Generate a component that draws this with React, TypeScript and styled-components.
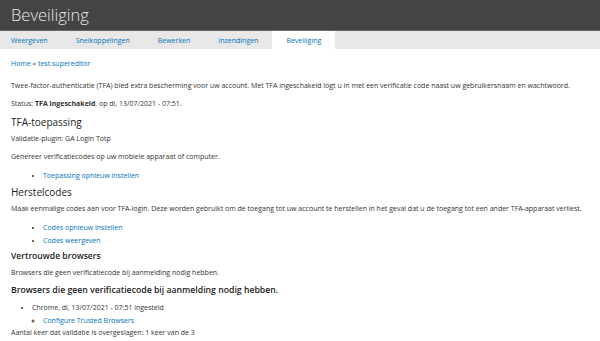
import React from "react";
import styled, { createGlobalStyle } from "styled-components";

const GlobalStyle = createGlobalStyle`
	html, body {
		margin: 0;
		padding: 0;
		background: #fff;
	}
	body {
		font-family: "Open Sans", "Liberation Sans", sans-serif;
		color: #333;
		font-size: 7px;
	}
	a {
		color: #0074bd;
		text-decoration: none;
	}
`;

const Header = styled.header`
	height: 30px;
	background: #444;
	border-bottom: 1px solid #6a6a6a;
	display: flex;
	align-items: center;
	padding: 0 11px;
`;

const PageTitle = styled.h1`
	margin: 0;
	color: #e8e8e8;
	font-size: 16.5px;
	font-weight: 300;
	line-height: 20px;
`;

const TabBar = styled.nav`
	height: 18px;
	background: #e8e8e8;
	display: flex;
	align-items: stretch;
`;

const Tab = styled.a<{ $active?: boolean }>`
	display: flex;
	align-items: center;
	padding: 0 14px;
	font-size: 7px;
	background: ${(p) => (p.$active ? "#fff" : "transparent")};
	&:first-child {
		padding-left: 11px;
	}
`;

const Content = styled.main`
	padding: 8.5px 11px 0;
`;

const Breadcrumb = styled.div`
	line-height: 11px;
	margin-bottom: 11px;
`;

const Text = styled.p`
	margin: 0 0 7px;
	line-height: 11px;
`;

const Heading = styled.h2<{ $size: number; $weight?: number; $lh: number; $mb: number }>`
	margin: 0 0 ${(p) => p.$mb}px;
	font-size: ${(p) => p.$size}px;
	font-weight: ${(p) => p.$weight ?? 400};
	line-height: ${(p) => p.$lh}px;
	color: #222;
`;

const List = styled.ul<{ $indent: number; $mb?: number }>`
	margin: 0 0 ${(p) => p.$mb ?? 3.5}px;
	padding-left: ${(p) => p.$indent}px;
	line-height: 13px;
`;

const Item = styled.li``;

const tabs = ["Weergeven", "Snelkoppelingen", "Bewerken", "Inzendingen", "Beveiliging"];

export default function App() {
	return (
		<>
			<GlobalStyle />
			<Header>
				<PageTitle>Beveiliging</PageTitle>
			</Header>
			<TabBar>
				{tabs.map((t) => (
					<Tab key={t} href="#" $active={t === "Beveiliging"}>
						{t}
					</Tab>
				))}
			</TabBar>
			<Content>
				<Breadcrumb>
					<a href="#">Home</a> » <a href="#">test.supereditor</a>
				</Breadcrumb>
				<Text>
					Twee-factor-authenticatie (TFA) bied extra bescherming voor uw account. Met TFA ingeschakeld logt u in met
					een verificatie code naast uw gebruikersnaam en wachtwoord.
				</Text>
				<Text>
					Status: <strong>TFA ingeschakeld</strong>, op di, 13/07/2021 - 07:51.
				</Text>
				<Heading $size={10} $lh={12} $mb={5.5}>
					TFA-toepassing
				</Heading>
				<Text>Validatie-plugin: GA Login Totp</Text>
				<Text>Genereer verificatiecodes op uw mobiele apparaat of computer.</Text>
				<List $indent={32}>
					<Item>
						<a href="#">Toepassing opnieuw instellen</a>
					</Item>
				</List>
				<Heading $size={10} $lh={12} $mb={5.5}>
					Herstelcodes
				</Heading>
				<Text>
					Maak eenmalige codes aan voor TFA-login. Deze worden gebruikt om de toegang tot uw account te herstellen in
					het geval dat u de toegang tot een ander TFA-apparaat verliest.
				</Text>
				<List $indent={32}>
					<Item>
						<a href="#">Codes opnieuw instellen</a>
					</Item>
					<Item>
						<a href="#">Codes weergeven</a>
					</Item>
				</List>
				<Heading $size={8.6} $weight={600} $lh={10} $mb={6.5}>
					Vertrouwde browsers
				</Heading>
				<Text>Browsers die geen verificatiecode bij aanmelding nodig hebben.</Text>
				<Heading $size={8.7} $weight={600} $lh={10} $mb={6}>
					Browsers die geen verificatiecode bij aanmelding nodig hebben.
				</Heading>
				<List $indent={21} $mb={0}>
					<Item>
						Chrome, di, 13/07/2021 - 07:51 ingesteld
						<List $indent={11} $mb={0}>
							<Item>
								<a href="#">Configure Trusted Browsers</a>
							</Item>
						</List>
					</Item>
				</List>
				<Text>Aantal keer dat validatie is overgeslagen: 1 keer van de 3</Text>
			</Content>
		</>
	);
}
